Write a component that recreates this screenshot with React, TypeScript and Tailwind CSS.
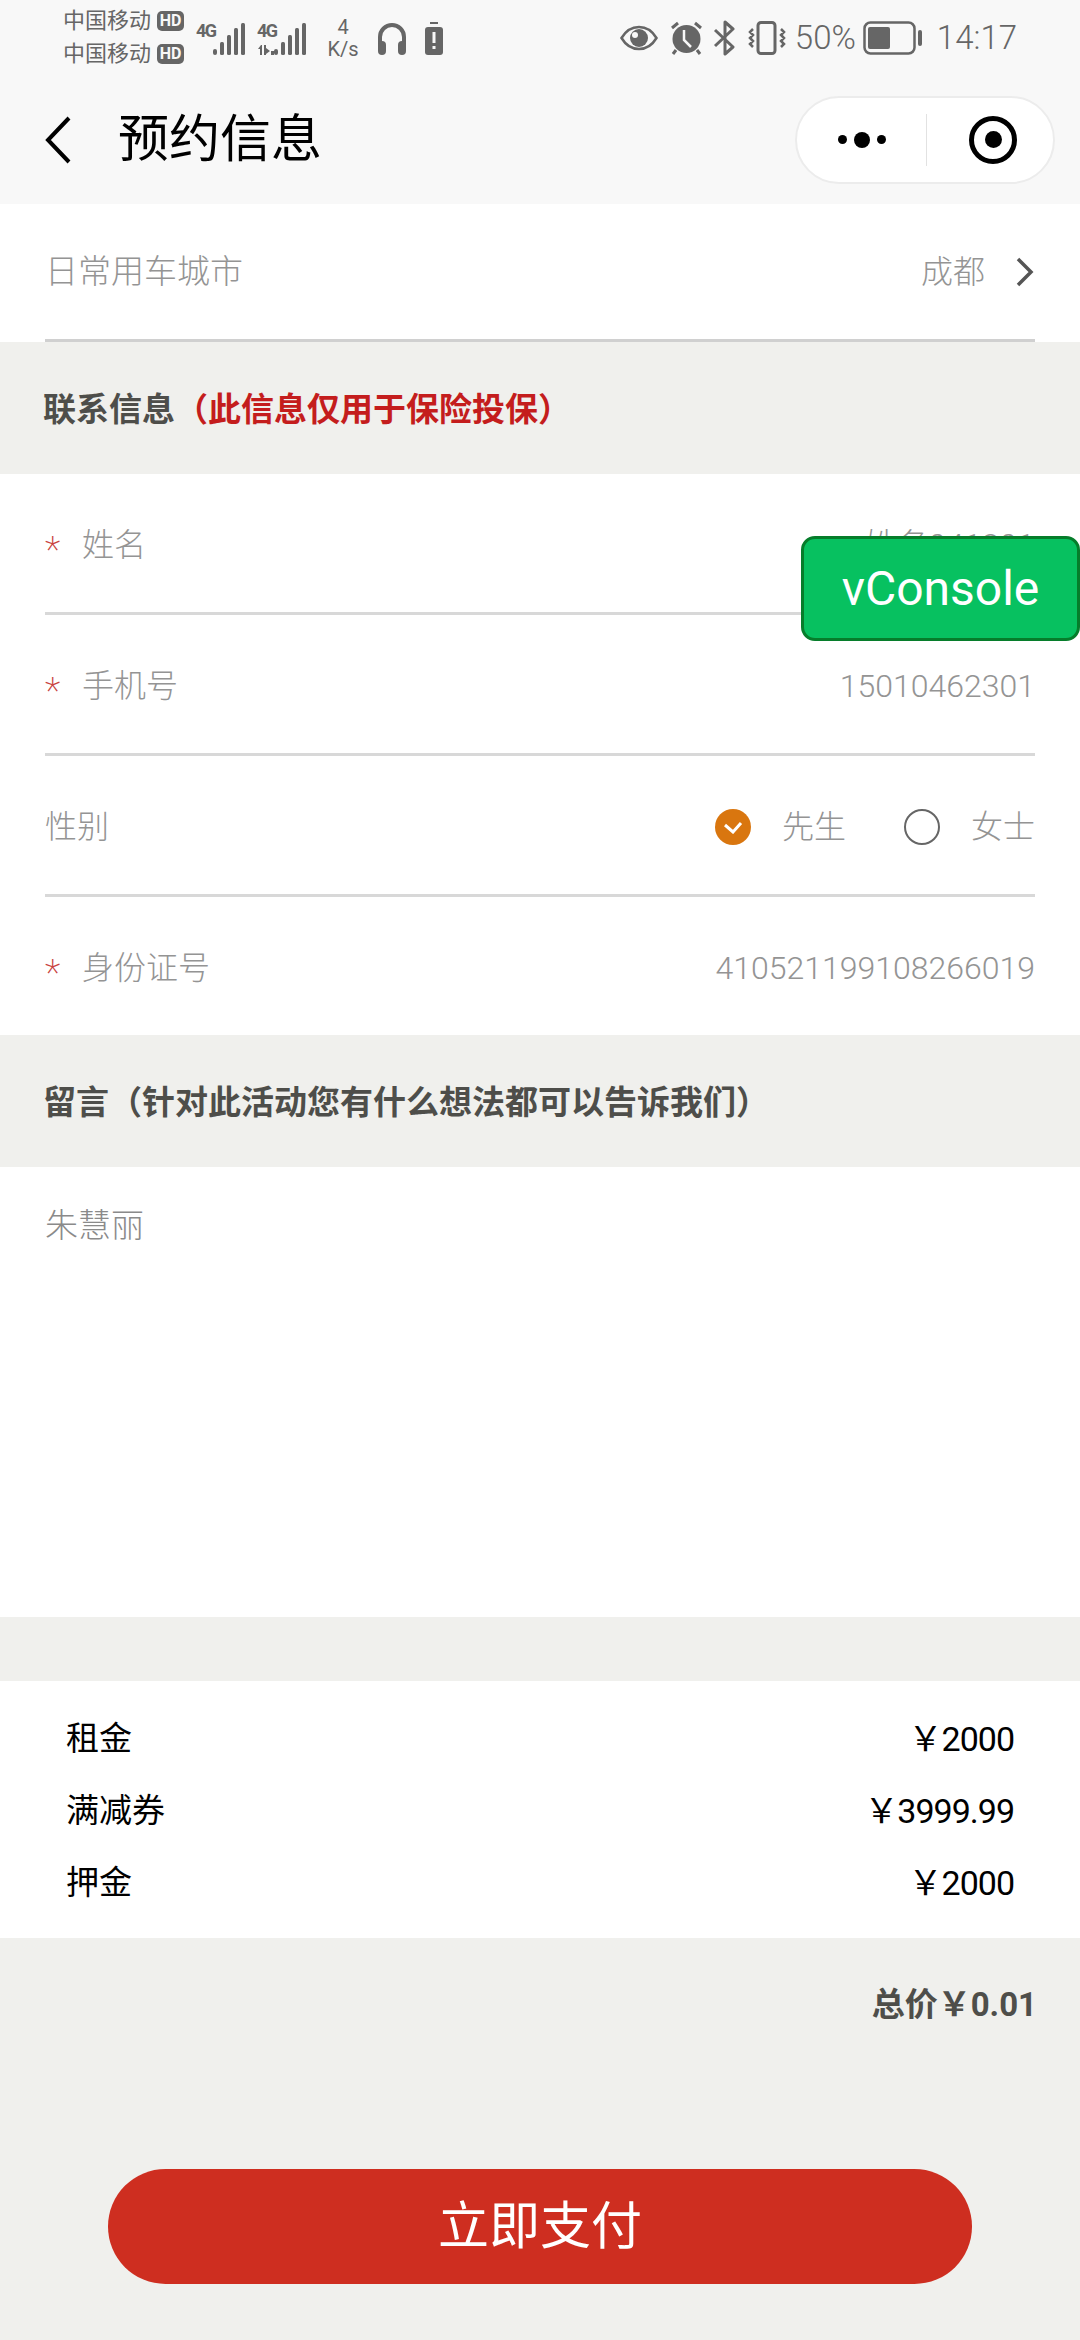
const cjk = "font-['Roboto','Noto_Sans_CJK_SC',sans-serif]";

function Carrier() {
  return (
    <div className="flex items-center h-[33px]">
      <span className="text-[22px] leading-none text-[#666] w-[94px]">中国移动</span>
      <span className="w-[27px] h-[20px] rounded-[5px] bg-[#666] text-[#f8f8f8] text-[16px] leading-[20px] font-bold text-center">HD</span>
    </div>
  );
}

function Bars({ arrows }: { arrows?: boolean }) {
  return (
    <svg width="50" height="40" viewBox="0 -6 50 40" fill="#666">
      <text x="0" y="15" fontSize="18" fontWeight="700" fontFamily="Roboto" letterSpacing="-1.500" fill="#666">4G</text>
      {arrows && <path d="M1 27l3-4h1v10H3v-6zM7 23h2v10H7zM9 26l4 3-4 3zM14 29h3v4h-3z" />}
      <rect x="17" y="27" width="4" height="6" rx="2" />
      <rect x="24" y="20" width="4" height="13" rx="1.500" />
      <rect x="31" y="13" width="4" height="20" rx="1.500" />
      <rect x="38" y="6" width="4" height="27" rx="1.500" />
      <rect x="45" y="1" width="4" height="32" rx="1.500" />
    </svg>
  );
}

function StatusBar() {
  return (
    <div className="h-[75px] flex items-center pl-[63px] pr-[63px] text-[#666]">
      <div className="flex flex-col">
        <Carrier />
        <Carrier />
      </div>
      <div className="ml-[12px] -mt-[4px]"><Bars /></div>
      <div className="ml-[11px] -mt-[4px]"><Bars arrows /></div>
      <div className="ml-[19px] w-[34px] flex flex-col items-center leading-none">
        <span className="text-[20px] leading-[22px]">4</span>
        <span className="text-[20px] leading-[22px]">K/s</span>
      </div>
      <svg className="ml-[17px] mt-[2px]" width="30" height="34" viewBox="0 0 30 34" fill="none">
        <path d="M3 24V15a12 12 0 0 1 24 0v9" stroke="#666" strokeWidth="4" />
        <rect x="1" y="19" width="8" height="14" rx="4" fill="#666" />
        <rect x="21" y="19" width="8" height="14" rx="4" fill="#666" />
      </svg>
      <svg className="ml-[17px] mt-[2px]" width="20" height="34" viewBox="0 0 20 34">
        <rect x="6" y="0" width="8" height="2" fill="#666" />
        <rect x="1" y="5" width="18" height="28" rx="3" fill="#666" />
        <rect x="8.500" y="10" width="3" height="11" fill="#f8f8f8" />
        <rect x="8.500" y="24" width="3" height="3" fill="#f8f8f8" />
      </svg>

      <div className="ml-auto flex items-center">
        <svg width="38" height="26" viewBox="0 0 38 26" fill="none">
          <path d="M1.500 13C6 5.500 12 2 19 2s13 3.500 17.500 11C32 20.500 26 24 19 24S6 20.500 1.500 13z" stroke="#666" strokeWidth="2.500" />
          <circle cx="19" cy="13" r="9" fill="#666" />
          <circle cx="15" cy="10" r="3" fill="#f8f8f8" />
        </svg>
        <svg className="ml-[12px]" width="33" height="34" viewBox="0 0 33 34" fill="none">
          <circle cx="16.500" cy="18" r="14" fill="#666" />
          <path d="M14 9v10l7 7" stroke="#f8f8f8" strokeWidth="2.500" />
          <path d="M2 7l6-5M31 7l-6-5M6 29l-3 4M27 29l3 4" stroke="#666" strokeWidth="3" />
        </svg>
        <svg className="ml-[10px]" width="23" height="36" viewBox="0 0 23 36" fill="none">
          <path d="M2 10l18 17-8 7V2l8 7L2 26" stroke="#666" strokeWidth="3" strokeLinejoin="round" />
        </svg>
        <svg className="ml-[12px]" width="38" height="34" viewBox="0 0 38 34" fill="none">
          <rect x="10" y="1.500" width="17" height="31" rx="3" stroke="#666" strokeWidth="3" />
          <path d="M5 8l-3 3 3 3-3 3 3 3-3 3 3 3M33 8l3 3-3 3 3 3-3 3 3 3-3 3" stroke="#666" strokeWidth="2.500" />
        </svg>
        <span className="ml-[9px] text-[33px] leading-none font-light">50%</span>
        <svg className="ml-[7px]" width="60" height="34" viewBox="0 0 60 34" fill="none">
          <rect x="1.500" y="1.500" width="50" height="31" rx="6" stroke="#666" strokeWidth="2.500" />
          <rect x="5" y="6" width="22" height="22" rx="2" fill="#666" />
          <rect x="55" y="9" width="4" height="16" rx="2" fill="#666" />
        </svg>
        <span className="ml-[14px] text-[33px] leading-none font-light">14:17</span>
      </div>
    </div>
  );
}

function NavBar() {
  return (
    <div className="h-[129px] flex items-center pl-[45px] pr-[25px]">
      <svg width="26" height="48" viewBox="0 0 26 48" fill="none">
        <path d="M24 2L3 24l21 22" stroke="#000" strokeWidth="4" />
      </svg>
      <h1 className="ml-[47px] text-[51px] leading-none font-normal text-black">预约信息</h1>
      <div className="ml-auto w-[260px] h-[88px] rounded-full bg-white border-2 border-[#ececec] flex items-center">
        <div className="w-[129px] flex items-center justify-center gap-[7px]">
          <span className="w-[9px] h-[9px] rounded-full bg-black" />
          <span className="w-[16px] h-[16px] rounded-full bg-black" />
          <span className="w-[9px] h-[9px] rounded-full bg-black" />
        </div>
        <div className="w-px h-[52px] bg-[#e2e2e2]" />
        <div className="flex-1 flex items-center justify-center pl-[6px]">
          <div className="w-[48px] h-[48px] rounded-full border-[5px] border-black flex items-center justify-center">
            <span className="w-[17px] h-[17px] rounded-full bg-black" />
          </div>
        </div>
      </div>
    </div>
  );
}

function SectionTitle({ children }: { children: React.ReactNode }) {
  return (
    <div className="h-[132px] bg-[#f0f0ed] flex items-center pl-[43px] pt-[3px] text-[33px] font-bold text-[#4e4e4a]">
      {children}
    </div>
  );
}

function FormRow({ label, required, value, last, h }: { label: string; required?: boolean; value?: React.ReactNode; last?: boolean; h: string }) {
  return (
    <div className={`${h} mx-[45px] pt-[4px] flex items-center text-[32px] font-light text-[#949494] ${last ? "" : "border-b-[3px] border-[#d8d8d8]"}`}>
      {required && <span className="w-[37px] h-[22px] text-[#c9433f] text-[36px] leading-[32px] font-extralight">*</span>}
      <span>{label}</span>
      <div className="ml-auto flex items-center">{value}</div>
    </div>
  );
}

function PriceRow({ label, value }: { label: string; value: string }) {
  return (
    <div className="h-[72px] flex items-center justify-between text-[33px] text-black">
      <span>{label}</span>
      <span className="text-[34px] tracking-[-1px]">{value}</span>
    </div>
  );
}

export default function App() {
  return (
    <div className={`relative w-[1080px] h-[2340px] bg-[#f0f0ed] overflow-hidden flex flex-col ${cjk}`}>
      <header className="h-[204px] bg-[#f8f8f8]">
        <StatusBar />
        <NavBar />
      </header>

      <div className="bg-white">
        <div className="h-[138px] mx-[45px] flex items-center border-b-[3px] border-[#d0d0d0] font-light text-[33px] text-[#949494]">
          <span>日常用车城市</span>
          <span className="ml-auto text-[32px]">成都</span>
          <svg className="ml-[30px]" width="20" height="32" viewBox="0 0 20 32" fill="none">
            <path d="M3 3l13 13L3 29" stroke="#555" strokeWidth="3.500" />
          </svg>
        </div>
      </div>

      <SectionTitle>
        联系信息<span className="text-[#c41d1d]">（此信息仅用于保险投保）</span>
      </SectionTitle>

      <div className="bg-white">
        <FormRow h="h-[141px]" required label="姓名" value="姓名041301" />
        <FormRow h="h-[141px]" required label="手机号" value="15010462301" />
        <FormRow
          h="h-[141px]"
          label="性别"
          value={
            <>
              <span className="w-[36px] h-[36px] rounded-full bg-[#d9760f] flex items-center justify-center">
                <svg width="20" height="14" viewBox="0 0 20 14" fill="none">
                  <path d="M2 5l8 7 8-9" stroke="#fff" strokeWidth="3" />
                </svg>
              </span>
              <span className="ml-[31px]">先生</span>
              <span className="ml-[58px] w-[36px] h-[36px] rounded-full border-2 border-[#666]" />
              <span className="ml-[31px]">女士</span>
            </>
          }
        />
        <FormRow h="h-[138px]" required last label="身份证号" value="410521199108266019" />
      </div>

      <SectionTitle>留言（针对此活动您有什么想法都可以告诉我们）</SectionTitle>

      <div className="h-[450px] bg-white px-[45px] pt-[36px] text-[33px] leading-[46px] font-light text-[#8a8a8a]">朱慧丽</div>

      <div className="mt-[64px] h-[257px] bg-white px-[66px] py-[22px]">
        <PriceRow label="租金" value="￥2000" />
        <PriceRow label="满减券" value="￥3999.99" />
        <PriceRow label="押金" value="￥2000" />
      </div>

      <div className="mt-[46px] pr-[43px] text-right text-[33px] leading-[42px] font-bold text-[#4e4e4a]">总价￥0.01</div>

      <button className="mt-[143px] mx-[108px] h-[115px] rounded-full bg-[#ce2e20] text-white text-[51px] leading-none">立即支付</button>

      {/* vConsole floating switch */}
      <div className="absolute left-[801px] top-[536px] w-[279px] h-[105px] rounded-[14px] bg-[#07c160] border-[3px] border-[#067d2b] text-white text-[48px] flex items-center justify-center">
        vConsole
      </div>
    </div>
  );
}
